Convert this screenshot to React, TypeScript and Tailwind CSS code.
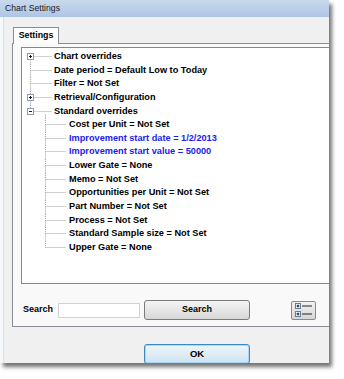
import React from 'react';

type Row = { text: string; level: 0 | 1; box?: 'plus' | 'minus'; blue?: boolean };

const rows: Row[] = [
  { text: 'Chart overrides', level: 0, box: 'plus' },
  { text: 'Date period = Default Low to Today', level: 0 },
  { text: 'Filter = Not Set', level: 0 },
  { text: 'Retrieval/Configuration', level: 0, box: 'plus' },
  { text: 'Standard overrides', level: 0, box: 'minus' },
  { text: 'Cost per Unit = Not Set', level: 1 },
  { text: 'Improvement start date = 1/2/2013', level: 1, blue: true },
  { text: 'Improvement start value = 50000', level: 1, blue: true },
  { text: 'Lower Gate = None', level: 1 },
  { text: 'Memo = Not Set', level: 1 },
  { text: 'Opportunities per Unit = Not Set', level: 1 },
  { text: 'Part Number = Not Set', level: 1 },
  { text: 'Process = Not Set', level: 1 },
  { text: 'Standard Sample size = Not Set', level: 1 },
  { text: 'Upper Gate = None', level: 1 },
];

const H = 13.64;
const CY = 6.5;
const X0 = 8.5;
const X1 = 23.5;
const LINE = '#a3a3a3';

function Connector({ row, index }: { row: Row; index: number }) {
  const lastRoot = 4;
  const lastChild = rows.length - 1;
  const w = row.level === 0 ? 32 : 47;
  const dash = { stroke: LINE, strokeWidth: 1, strokeDasharray: '1 1' };
  return (
    <svg width={w} height={H} className="shrink-0 overflow-visible">
      {row.level === 0 && (
        <>
          {index > 0 && <line x1={X0} y1={0} x2={X0} y2={CY} {...dash} />}
          {index < lastRoot && <line x1={X0} y1={CY} x2={X0} y2={H} {...dash} />}
          <line x1={X0} y1={CY} x2={30} y2={CY} {...dash} />
          {row.box === 'minus' && <line x1={X1} y1={CY + 3} x2={X1} y2={H} {...dash} />}
          {row.box && (
            <>
              <rect x={5.5} y={CY - 3} width={6} height={6} fill="#fff" stroke="#8f9bb0" strokeWidth={1} />
              <line x1={7} y1={CY} x2={10} y2={CY} stroke="#1a1a1a" strokeWidth={1} />
              {row.box === 'plus' && <line x1={X0} y1={CY - 1.5} x2={X0} y2={CY + 1.5} stroke="#1a1a1a" strokeWidth={1} />}
            </>
          )}
        </>
      )}
      {row.level === 1 && (
        <>
          <line x1={X1} y1={0} x2={X1} y2={CY} {...dash} />
          {index < lastChild && <line x1={X1} y1={CY} x2={X1} y2={H} {...dash} />}
          <line x1={X1} y1={CY} x2={44} y2={CY} {...dash} />
        </>
      )}
    </svg>
  );
}

function ExpandGlyph() {
  return (
    <svg width="23" height="17" viewBox="0 0 23 17">
      {[4, 12].map((y) => (
        <g key={y}>
          <rect x={3.5} y={y - 2.5} width={5} height={5} fill="#fff" stroke="#5b7fa8" strokeWidth={1} />
          <line x1={4.5} y1={y} x2={7.5} y2={y} stroke="#111" strokeWidth={1} />
          <line x1={6} y1={y - 1.5} x2={6} y2={y + 1.5} stroke="#111" strokeWidth={1} />
          <line x1={10} y1={y} x2={20} y2={y} stroke="#222" strokeWidth={1} />
        </g>
      ))}
    </svg>
  );
}

export default function App() {
  return (
    <div className="w-[344px] h-[379px] bg-white overflow-hidden" style={{ fontFamily: '"Liberation Sans", Arial, sans-serif' }}>
      <div className="w-[329px] h-[363px] bg-[#f0f0f0] flex flex-col shadow-[3px_4px_4px_rgba(0,0,0,0.55)] overflow-hidden">
        {/* title bar */}
        <div className="h-[17px] shrink-0 bg-gradient-to-b from-[#c9d9ee] to-[#adc5e5] flex items-center pl-[5px] text-[8.7px] text-[#1b1b1b]">
          Chart Settings
        </div>

        <div className="flex-1 flex flex-col border-l-[3px] border-[#f6f9fc]">
          <div className="flex-1 flex flex-col border-l border-[#d3e0ee]">
            {/* tab header */}
            <div className="pt-[10px] pl-[9px] flex">
              <div className="relative z-10 -mb-px h-[17px] w-[46px] bg-[#fcfcfc] border border-b-0 border-[#898c95] flex items-center justify-center font-bold text-[8.8px] text-black">
                Settings
              </div>
            </div>

            {/* tab panel */}
            <div className="ml-[8px] h-[284px] bg-[#f9f9f9] border border-r-0 border-[#898c95] flex flex-col">
              <div className="mt-[3px] ml-[8px] h-[237px] bg-white border border-r-0 border-[#828790] pt-[2px]">
                {rows.map((row, i) => (
                  <div key={row.text} className="flex items-start" style={{ height: H }}>
                    <Connector row={row} index={i} />
                    <span
                      className={`font-bold text-[9.2px] whitespace-nowrap leading-[13px] ${row.blue ? 'text-[#1c1cf0]' : 'text-black'}`}
                    >
                      {row.text}
                    </span>
                  </div>
                ))}
              </div>

              <div className="mt-[16px] h-[20px] flex items-center pl-[10px]">
                <span className="font-bold text-[9px] text-black">Search</span>
                <div className="ml-[5px] w-[82px] h-[15px] bg-white border border-[#d2d2d2]" />
                <button className="ml-[4px] w-[106px] h-[20px] rounded-[3px] border border-[#7a7a7a] bg-gradient-to-b from-[#f4f4f4] to-[#d8d8d8] font-bold text-[9px] text-black">
                  Search
                </button>
                <button className="ml-[41px] w-[25px] h-[19px] rounded-[2px] border border-[#8a8a8a] bg-gradient-to-b from-[#f2f2f2] to-[#d6d6d6] flex items-center justify-center">
                  <ExpandGlyph />
                </button>
              </div>
            </div>

            {/* footer */}
            <div className="mt-[13px] pl-[140px]">
              <button className="w-[106px] h-[20px] rounded-[3px] border border-[#3c8ac4] bg-gradient-to-b from-[#eef6fb] to-[#cfe3f1] shadow-[inset_0_0_0_1px_#a8d8f5] font-bold text-[9.5px] text-black">
                OK
              </button>
            </div>
          </div>
        </div>
      </div>
    </div>
  );
}
